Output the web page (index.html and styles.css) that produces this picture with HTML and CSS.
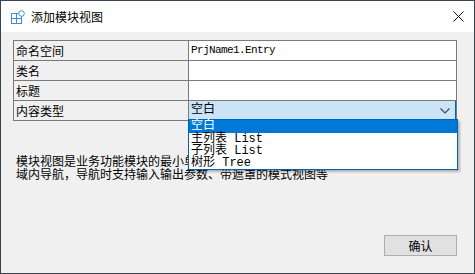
FILE: index.html
```html
<!DOCTYPE html>
<html lang="zh">
<head>
    <meta charset="UTF-8">
    <title>添加模块视图</title>
    <link rel="stylesheet" href="styles.css">
</head>
<body>
    <div class="window">
        <div class="titlebar">
            <svg class="app-icon" width="14" height="14" viewBox="0 0 14 14">
                <rect x="0.5" y="3.5" width="5" height="5" fill="none" stroke="#3a8fd6"/>
                <rect x="0.5" y="8.5" width="5" height="5" fill="none" stroke="#3a8fd6"/>
                <rect x="5.5" y="8.5" width="5" height="5" fill="none" stroke="#3a8fd6"/>
                <rect x="5.5" y="3.5" width="5" height="5" fill="none" stroke="#3a8fd6"/>
                <circle cx="10.5" cy="3.5" r="2.8" fill="#ffffff" stroke="#3a8fd6"/>
            </svg>
            <span class="title">添加模块视图</span>
            <svg class="close" width="11" height="11" viewBox="0 0 11 11">
                <path d="M0.5 0.5 L10.5 10.5 M10.5 0.5 L0.5 10.5" stroke="#111" stroke-width="1"/>
            </svg>
        </div>

        <div class="content">
            <div class="grid">
                <div class="row">
                    <div class="label">命名空间</div>
                    <div class="value mono">PrjName1.Entry</div>
                </div>
                <div class="row">
                    <div class="label">类名</div>
                    <div class="value"></div>
                </div>
                <div class="row">
                    <div class="label">标题</div>
                    <div class="value"></div>
                </div>
                <div class="row">
                    <div class="label">内容类型</div>
                    <div class="value combo">
                        <span class="mono">空白</span>
                        <svg class="chevron" width="10" height="6" viewBox="0 0 10 6">
                            <path d="M0.5 0.5 L5 5 L9.5 0.5" fill="none" stroke="#444" stroke-width="1.1"/>
                        </svg>
                        <ul class="droplist">
                            <li class="selected">空白</li>
                            <li>主列表 List</li>
                            <li>子列表 List</li>
                            <li>树形 Tree</li>
                        </ul>
                    </div>
                </div>
            </div>

            <p class="desc">模块视图是业务功能模块的最小单元，可在菜单中打开，也可在模块视图之间进行<br>域内导航，导航时支持输入输出参数、带遮罩的模式视图等</p>

            <div class="footer">
                <button class="ok-btn">确认</button>
            </div>
        </div>
    </div>
</body>
</html>
```

FILE: styles.css
```css
html, body {
    margin: 0;
    padding: 0;
}
body {
    font-family: "Noto Sans CJK SC", sans-serif;
    font-size: 12px;
    color: #000;
}

.window {
    width: 475px;
    height: 274px;
    box-sizing: border-box;
    border: 1px solid #3b4350;
    background: #f0f0f0;
    display: flex;
    flex-direction: column;
}

.titlebar {
    height: 31px;
    background: #ffffff;
    display: flex;
    align-items: center;
    padding: 0 0 0 10px;
}
.app-icon {
    margin-top: 1px;
}
.title {
    margin-left: 6px;
    font-size: 12px;
    color: #000;
}
.close {
    margin-left: auto;
    margin-right: 10px;
}

.content {
    flex: 1;
    display: flex;
    flex-direction: column;
    padding: 8px 17px 17px 12px;
}

.grid {
    border: 1px solid #7a7a7a;
    border-bottom: none;
}
.row {
    display: grid;
    grid-template-columns: 175px 1fr;
    height: 20px;
    box-sizing: border-box;
    border-bottom: 1px solid #7a7a7a;
}
.label {
    border-right: 1px solid #7a7a7a;
    padding-left: 2px;
    line-height: 19px;
}
.value {
    background: #ffffff;
    padding-left: 2px;
    line-height: 19px;
}
.mono {
    font-family: "Liberation Mono", "Noto Sans CJK SC", monospace;
    font-size: 11px;
    letter-spacing: -0.6px;
}
.combo {
    position: relative;
    background: #cce4f7;
    box-shadow: inset 0 -1px 0 #0063b1, inset -1px 0 0 #0063b1;
    display: flex;
    align-items: center;
}
.combo .mono {
    font-size: 12px;
    letter-spacing: 0;
}
.chevron {
    margin-left: auto;
    margin-right: 6px;
}

.droplist {
    position: absolute;
    left: -1px;
    top: 18px;
    width: 270px;
    box-sizing: border-box;
    margin: 0;
    padding: 0;
    list-style: none;
    background: #ffffff;
    border: 1px solid #0063b1;
    box-shadow: 2px 2px 2px rgba(0, 0, 0, 0.25);
    font-family: "Liberation Mono", "Noto Sans CJK SC", monospace;
    font-size: 12px;
    z-index: 2;
}
.droplist li {
    height: 12px;
    line-height: 12px;
    padding-left: 2px;
}
.droplist li.selected {
    height: 13px;
    background: #0078d7;
    color: #ffffff;
}

.desc {
    margin: 33px 0 0 3px;
    line-height: 13px;
    font-size: 12px;
}

.footer {
    margin-top: auto;
    display: flex;
    justify-content: flex-end;
}
.ok-btn {
    width: 73px;
    height: 21px;
    background: #e1e1e1;
    border: 1px solid #adadad;
    font-family: "Noto Sans CJK SC", sans-serif;
    font-size: 12px;
    padding: 0;
    color: #000;
}
```
